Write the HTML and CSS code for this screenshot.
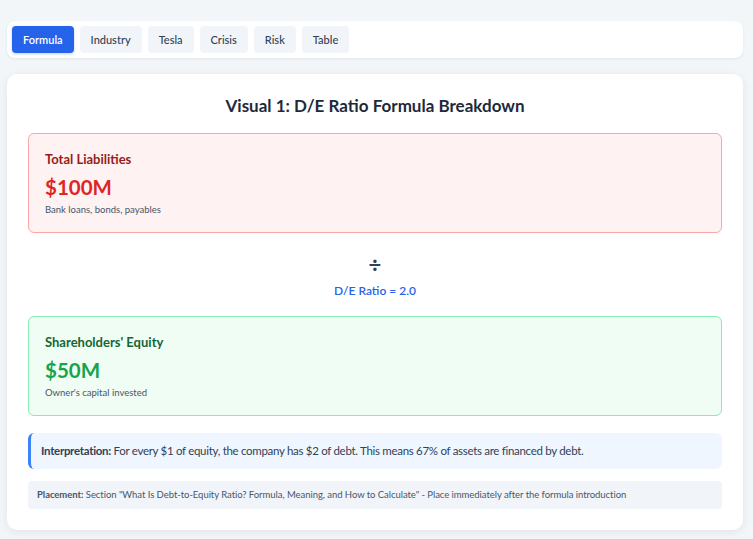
FILE: index.html
```html
<!DOCTYPE html>
<html lang="en">
<head>
    <meta charset="UTF-8">
    <meta name="viewport" content="width=device-width, initial-scale=1.0">
    <title>D/E Ratio Visuals</title>
    <link rel="stylesheet" href="styles.css">
</head>
<body>
    <div class="wrap">
        <nav class="tabs">
            <button class="tab active">Formula</button>
            <button class="tab">Industry</button>
            <button class="tab">Tesla</button>
            <button class="tab">Crisis</button>
            <button class="tab">Risk</button>
            <button class="tab">Table</button>
        </nav>

        <section class="card">
            <h2 class="title">Visual 1: D/E Ratio Formula Breakdown</h2>

            <div class="box red">
                <div class="box-label">Total Liabilities</div>
                <div class="box-value">$100M</div>
                <div class="box-desc">Bank loans, bonds, payables</div>
            </div>

            <div class="operator">
                <div class="op-sign">÷</div>
                <div class="op-result">D/E Ratio = 2.0</div>
            </div>

            <div class="box green">
                <div class="box-label">Shareholders' Equity</div>
                <div class="box-value">$50M</div>
                <div class="box-desc">Owner's capital invested</div>
            </div>

            <div class="note">
                <strong>Interpretation:</strong> For every $1 of equity, the company has $2 of debt. This means 67% of assets are financed by debt.
            </div>

            <div class="placement">
                <strong>Placement:</strong> Section "What Is Debt-to-Equity Ratio? Formula, Meaning, and How to Calculate" - Place immediately after the formula introduction
            </div>
        </section>
    </div>
</body>
</html>
```

FILE: styles.css
```css
*{
    margin: 0;
    padding: 0;
    box-sizing: border-box;
}
html,body{
    width: 100%;
    height: 100%;
}
body{
    background: #f3f6f9;
    font-family: Lato, "Noto Sans", sans-serif;
    color: #334155;
}
.wrap{
    padding: 21px 10px 0 7px;
}

/* tab bar */
.tabs{
    display: flex;
    gap: 6px;
    padding: 5px;
    background: #fff;
    border-radius: 8px;
    box-shadow: 0 1px 3px rgba(15, 23, 42, .08);
}
.tab{
    border: none;
    background: #f1f5f9;
    color: #334155;
    font-family: inherit;
    font-size: 11px;
    font-weight: 500;
    line-height: 15px;
    padding: 6px 11px;
    border-radius: 4px;
}
.tab.active{
    background: #2563eb;
    color: #fff;
    font-weight: 600;
    box-shadow: 0 1px 3px rgba(37, 99, 235, .3);
}

/* main card */
.card{
    margin-top: 16px;
    background: #fff;
    border-radius: 10px;
    padding: 20px 21px 21px;
    box-shadow: 0 2px 8px rgba(15, 23, 42, .08);
}
.title{
    text-align: center;
    font-size: 17px;
    font-weight: 700;
    line-height: 24px;
    color: #1e293b;
    margin-bottom: 15px;
}

.box{
    border: 1px solid;
    border-radius: 6px;
    padding: 16px 16px 15px;
}
.box.red{
    background: #fef2f2;
    border-color: #fca5a5;
}
.box.green{
    background: #f0fdf4;
    border-color: #86efac;
}
.box-label{
    font-size: 13px;
    font-weight: 700;
    line-height: 18px;
}
.red .box-label{ color: #991b1b; }
.green .box-label{ color: #166534; }
.box-value{
    margin-top: 5px;
    font-size: 20.5px;
    font-weight: 700;
    line-height: 28px;
}
.red .box-value{ color: #dc2626; }
.green .box-value{ color: #16a34a; }
.box-desc{
    margin-top: 2px;
    font-size: 9.5px;
    line-height: 14px;
    color: #475569;
}

.operator{
    margin: 20px 0 17px;
    text-align: center;
}
.op-sign{
    font-size: 22px;
    font-weight: 700;
    line-height: 24px;
    color: #334155;
}
.op-result{
    margin-top: 6px;
    font-size: 12px;
    font-weight: 600;
    line-height: 16px;
    color: #2563eb;
}

.note{
    margin-top: 17px;
    background: #eff6ff;
    border-left: 3px solid #3b82f6;
    border-radius: 6px;
    padding: 10px 10px;
    font-size: 11.5px;
    letter-spacing: -0.3px;
    line-height: 16px;
    color: #334155;
}
.note strong{
    font-weight: 700;
}

.placement{
    margin-top: 12px;
    background: #f1f5f9;
    border-radius: 4px;
    padding: 8px 9px;
    font-size: 9.5px;
    letter-spacing: -0.05px;
    line-height: 12px;
    color: #475569;
}
.placement strong{
    font-weight: 700;
}
```
